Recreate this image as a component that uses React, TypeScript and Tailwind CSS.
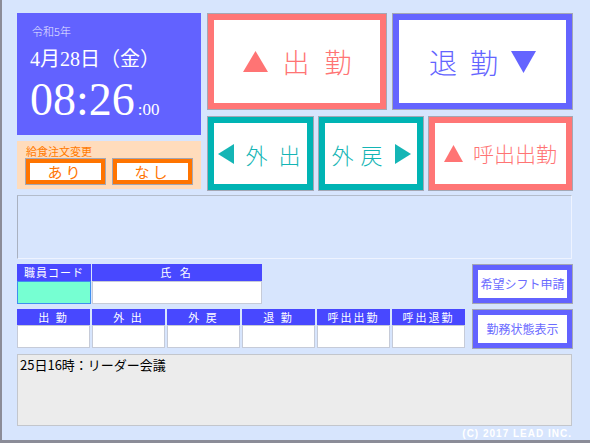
import type { ReactNode } from 'react';

const jp = "font-['Noto_Sans_CJK_JP','Noto_Sans',sans-serif]";

function Tri({ dir, className }: { dir: 'up' | 'down' | 'left' | 'right'; className: string }) {
    const pts = {
        up: '50,0 100,100 0,100',
        down: '0,0 100,0 50,100',
        left: '100,0 100,100 0,50',
        right: '0,0 100,50 0,100',
    }[dir];
    return (
        <svg viewBox="0 0 100 100" preserveAspectRatio="none" className={className}>
            <polygon points={pts} fill="currentColor" />
        </svg>
    );
}

function PunchButton({ color, className, children }: { color: string; className: string; children: ReactNode }) {
    return (
        <div className={`${className} ${color} bg-white shadow-[0_0_0_1px_#a4a7b4] flex items-center justify-center font-light`}>
            {children}
        </div>
    );
}

const headers = ['出 勤', '外 出', '外 戻', '退 勤', '呼出出勤', '呼出退勤'];

export default function App() {
    return (
        <div className={`w-[590px] h-[443px] bg-[#d7e5fd] border-l-2 border-b-[3px] border-[#8b8c98] pl-[15px] pr-[18px] pt-[13px] flex flex-col overflow-hidden ${jp}`}>
            {/* top: clock, meal order, punch buttons */}
            <div className="flex gap-[7px] h-[177px]">
                <div className="w-[184px] flex flex-col gap-[6px]">
                    <div className="h-[122px] bg-[#6262ff] text-white pl-[13px] pt-[11px]">
                        <div className="text-[11px] leading-[14px] text-[#e8e8ff] pl-[2px] font-light">令和5年</div>
                        <div className="text-[20px] leading-[26px] mt-[8px] font-['Liberation_Serif','Noto_Sans_CJK_JP',serif]">4月28日（金）</div>
                        <div className="flex items-baseline mt-[6px] font-['Liberation_Serif',serif]">
                            <span className="text-[46px] leading-[44px]">08:26</span>
                            <span className="text-[17px] ml-[3px]">:00</span>
                        </div>
                    </div>
                    <div className="h-[48px] bg-[#ffdcbc] px-[9px] pt-[3px]">
                        <div className="text-[11px] leading-[14px] text-[#ff7a00]">給食注文変更</div>
                        <div className="flex justify-between mt-[1px]">
                            {['あり', 'なし'].map((t) => (
                                <div key={t} className="w-[79px] h-[25px] bg-white border-[4px] border-[#ff7400] shadow-[0_0_0_1px_#a4a7b4] flex items-center justify-center text-[15px] leading-none tracking-[3px] text-[#ff7400]">
                                    {t}
                                </div>
                            ))}
                        </div>
                    </div>
                </div>

                <div className="flex-1 flex flex-col gap-[8px] pt-[1px]">
                    <div className="h-[95px] flex gap-[7px]">
                        <PunchButton color="border-[#ff7676] text-[#ff7474]" className="w-[178px] border-[6px] gap-[15px]">
                            <Tri dir="up" className="w-[25px] h-[21px]" />
                            <span className="text-[27px] leading-none">出</span>
                            <span className="text-[27px] leading-none">勤</span>
                        </PunchButton>
                        <PunchButton color="border-[#6464ff] text-[#6464ff]" className="flex-1 border-[6px] gap-[13px]">
                            <span className="text-[28px] leading-none">退</span>
                            <span className="text-[28px] leading-none">勤</span>
                            <Tri dir="down" className="w-[25px] h-[22px]" />
                        </PunchButton>
                    </div>
                    <div className="h-[73px] flex gap-[6px]">
                        <PunchButton color="border-[#00b4b4] text-[#14b5b5]" className="w-[105px] border-[6px] gap-[11px] pr-[2px]">
                            <Tri dir="left" className="w-[16px] h-[20px]" />
                            <span className="text-[22px] leading-none">外</span>
                            <span className="text-[22px] leading-none">出</span>
                        </PunchButton>
                        <PunchButton color="border-[#00b4b4] text-[#14b5b5]" className="w-[104px] border-[6px] gap-[7px]">
                            <span className="text-[22px] leading-none">外</span>
                            <span className="text-[22px] leading-none">戻</span>
                            <Tri dir="right" className="w-[16px] h-[20px] ml-[5px]" />
                        </PunchButton>
                        <PunchButton color="border-[#ff7676] text-[#ff7474]" className="flex-1 border-[6px] gap-[10px]">
                            <Tri dir="up" className="w-[19px] h-[17px]" />
                            <span className="text-[21px] leading-none">呼出出勤</span>
                        </PunchButton>
                    </div>
                </div>
            </div>

            {/* message area */}
            <div className="mt-[5px] h-[64px] border border-t-[#b3bccb] border-l-[#a9b1c0] border-r-[#eef3ff] border-b-[#eef3ff]" />

            {/* staff / times tables and side buttons */}
            <div className="mt-[5px] h-[84px] flex">
                <div className="w-[448px] flex flex-col">
                    <div className="grid grid-cols-[74px_170px] gap-x-[1px]">
                        <div className="h-[17px] bg-[#4848ff] text-white text-[11px] leading-[17px] text-center tracking-[1px]">職員コード</div>
                        <div className="h-[17px] bg-[#4848ff] text-white text-[11px] leading-[17px] text-center tracking-[3px]">氏 名</div>
                        <div className="h-[23px] bg-[#76ffd2] border border-[#3f8ff0]" />
                        <div className="h-[23px] bg-white border border-[#c6cbd8]" />
                    </div>
                    <div className="mt-[5px] grid grid-cols-[repeat(6,73px)] gap-x-[2px]">
                        {headers.map((h) => (
                            <div key={h} className="h-[16px] bg-[#4848ff] text-white text-[11px] leading-[16px] text-center tracking-[2px]">{h}</div>
                        ))}
                        {headers.map((h) => (
                            <div key={h + '-v'} className="h-[23px] bg-white border border-[#c6cbd8]" />
                        ))}
                    </div>
                </div>
                <div className="ml-auto w-[99px] flex flex-col gap-[7px] pt-[1px]">
                    {['希望シフト申請', '勤務状態表示'].map((t) => (
                        <div key={t} className="h-[38px] bg-white border-[5px] border-[#6262ff] shadow-[0_0_0_1px_#a4a7b4] flex items-center justify-center text-[12px] leading-none text-[#6b6bff]">
                            {t}
                        </div>
                    ))}
                </div>
            </div>

            {/* notices */}
            <div className="mt-[6px] h-[73px] bg-[#ececec] border border-[#c3c6cc] px-[2px] pt-[1px] text-[13px] leading-[18px] text-black">
                25日16時：リーダー会議
            </div>

            <div className="text-right text-white text-[10px] leading-[12px] font-bold tracking-[1px] font-['Liberation_Sans',sans-serif] mt-[2px]">
                (C) 2017 LEAD INC.
            </div>
        </div>
    );
}
